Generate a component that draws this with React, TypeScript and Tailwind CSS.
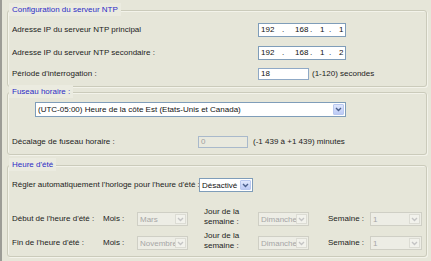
import type { ReactNode } from "react";

function Group({ title, className, children }: { title: string; className: string; children: ReactNode }) {
  return (
    <div className={`relative w-[420px] rounded-[3px] border border-[#cbcbbb] shadow-[inset_1px_1px_0_#f3f3ea,1px_1px_0_#f3f3ea] ${className}`}>
      <span className="absolute -top-[8px] left-[1px] bg-[#ebebe0] px-[3px] leading-[13px] text-[#2c2cc6]">{title}</span>
      {children}
    </div>
  );
}

function Chevron({ color }: { color: string }) {
  return (
    <svg width="7" height="5" viewBox="0 0 7 5">
      <path d="M1 1 L3.5 3.5 L6 1" fill="none" stroke={color} strokeWidth="1.4" />
    </svg>
  );
}

function Select({ value, className }: { value: string; className: string }) {
  return (
    <div className={`flex items-stretch border border-[#7f9db9] bg-white p-[1px] ${className}`}>
      <span className="min-w-0 flex-1 self-center whitespace-nowrap pl-[1px] leading-[11px] text-[#111]">{value}</span>
      <span className="flex w-[11px] shrink-0 items-center justify-center rounded-[1px] border border-[#b9c8f0] bg-gradient-to-b from-[#dfe7fd] to-[#bccaf5]">
        <Chevron color="#4a5f8c" />
      </span>
    </div>
  );
}

function DisabledSelect({ value, className }: { value: string; className: string }) {
  return (
    <div className={`flex items-stretch overflow-hidden border border-[#cfcfc5] bg-[#ededE5] p-[1px] ${className}`}>
      <span className="min-w-0 flex-1 self-center whitespace-nowrap pl-[1px] leading-[11px] text-[#a6a6a6]">{value}</span>
      <span className="flex w-[11px] shrink-0 items-center justify-center border border-[#dcdcd4] bg-[#f2f2ec]">
        <Chevron color="#c4c4c4" />
      </span>
    </div>
  );
}

function IpInput({ last }: { last: string }) {
  return (
    <div className="flex h-[14px] w-[88px] items-center border border-[#7f9db9] bg-white pl-[2px] text-[#111]">
      <span className="w-[21px]">192</span>
      <span className="w-[13px]">.</span>
      <span className="w-[15px]">168</span>
      <span className="w-[10px]">.</span>
      <span className="w-[9px]">1</span>
      <span className="w-[10px]">.</span>
      <span>{last}</span>
    </div>
  );
}

function DstRow({ label, month, className }: { label: string; month: string; className: string }) {
  return (
    <div className={`flex h-[14px] items-center ${className}`}>
      <span className="w-[91px] whitespace-nowrap">{label}</span>
      <span className="w-[34px]">Mois :</span>
      <DisabledSelect value={month} className="h-[14px] w-[51px]" />
      <span className="ml-[16px] mb-[4px] w-[54px] leading-[10px]">
        Jour de la
        <br />
        semaine :
      </span>
      <DisabledSelect value="Dimanche" className="h-[14px] w-[51px]" />
      <span className="ml-[19px] w-[42px]">Semaine :</span>
      <DisabledSelect value="1" className="h-[14px] w-[52px]" />
    </div>
  );
}

export default function App() {
  return (
    <div className="h-[261px] w-[431px] overflow-hidden border-l-2 border-[#9c9c96] bg-[#e6e6d9] pl-[5px] pt-[10px] font-['Liberation_Sans',Arial,sans-serif] text-[8px] text-[#1c1c1c]">
      <Group title="Configuration du serveur NTP" className="pl-[4px] pt-[12px] pb-[6px]">
        <div className="grid grid-cols-[246px_auto] items-center">
          <span className="flex h-[14px] items-center">Adresse IP du serveur NTP principal</span>
          <IpInput last="1" />
        </div>
        <div className="mt-[9px] grid grid-cols-[246px_auto] items-center">
          <span>Adresse IP du serveur NTP secondaire :</span>
          <IpInput last="2" />
        </div>
        <div className="mt-[8px] grid grid-cols-[246px_auto] items-center">
          <span>Période d'interrogation :</span>
          <div className="flex items-center">
            <div className="flex h-[12px] w-[51px] items-center border border-[#8fa9c6] bg-white pl-[2px] text-[#111]">18</div>
            <span className="ml-[3px]">(1-120) secondes</span>
          </div>
        </div>
      </Group>

      <Group title="Fuseau horaire :" className="mt-[5px] pl-[4px] pt-[9px] pb-[6px]">
        <div className="pl-[23px]">
          <Select value="(UTC-05:00) Heure de la côte Est (Etats-Unis et Canada)" className="h-[15px] w-[311px]" />
        </div>
        <div className="mt-[19px] grid grid-cols-[186px_auto] items-center">
          <span>Décalage de fuseau horaire :</span>
          <div className="flex items-center">
            <div className="flex h-[12px] w-[50px] items-center border border-[#a9b9cb] bg-[#e9e9de] pl-[2px] text-[#a0a0a0]">0</div>
            <span className="ml-[5px]">(-1 439 à +1 439) minutes</span>
          </div>
        </div>
      </Group>

      <Group title="Heure d'été" className="mt-[10px] pl-[4px] pt-[12px] pb-[6px]">
        <div className="grid h-[14px] grid-cols-[187px_auto] items-center">
          <span className="whitespace-nowrap">Régler automatiquement l'horloge pour l'heure d'été :</span>
          <Select value="Désactivé" className="h-[14px] w-[54px]" />
        </div>
        <DstRow label="Début de l'heure d'été :" month="Mars" className="mt-[20px]" />
        <DstRow label="Fin de l'heure d'été :" month="Novembre" className="mt-[10px]" />
      </Group>
    </div>
  );
}
